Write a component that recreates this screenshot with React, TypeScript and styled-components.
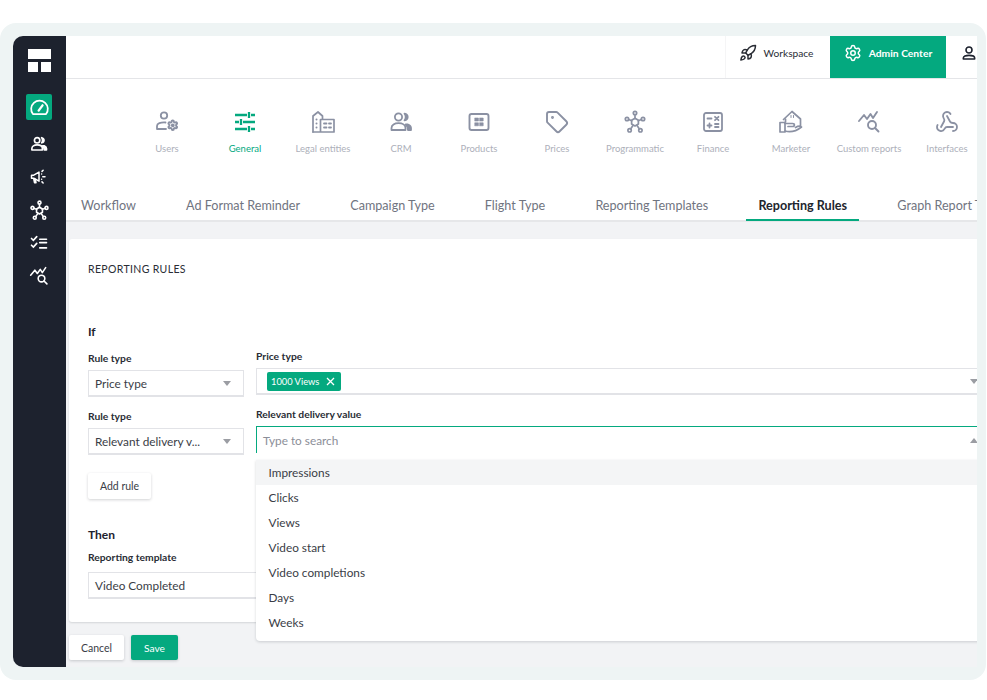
import React from "react";
import styled, { createGlobalStyle } from "styled-components";
import { Rocket, Settings, Tag, Webhook } from "lucide-react";

const Global = createGlobalStyle`
  html, body { margin: 0; padding: 0; background: #fff; }
  * { box-sizing: border-box; }
  body { font-family: "Lato", "Open Sans", sans-serif; }
`;

const GREEN = "#04a97f";

const Frame = styled.div`
  margin-top: 23px;
  width: 986px;
  height: 657px;
  padding: 13px 9px 13px 13px;
  background: #eef4f4;
  border-radius: 16px;
`;
const Shell = styled.div`
  display: flex;
  width: 964px;
  height: 631px;
  overflow: hidden;
  border-radius: 10px 0 0 10px;
  background: #f2f3f5;
`;
const Sidebar = styled.nav`
  width: 53px;
  flex: none;
  background: #1d222e;
  display: flex;
  flex-direction: column;
  align-items: center;
  padding-top: 13px;
`;
const Logo = styled.div`
  width: 23px;
  display: grid;
  grid-template-columns: 10px 10px;
  grid-template-rows: 10px 10px;
  gap: 3px;
  margin-bottom: 22px;
  & > i { background: #fff; display: block; }
  & > i:first-child { grid-column: 1 / 3; }
`;
const SideItem = styled.div<{ $active?: boolean }>`
  width: 26px;
  height: 26px;
  margin: 0 1px ${(p) => (p.$active ? "11px" : "7px")} 0;
  border-radius: 2px;
  display: flex;
  align-items: center;
  justify-content: center;
  color: #fff;
  background: ${(p) => (p.$active ? GREEN : "transparent")};
`;
const Main = styled.div`
  flex: 1;
  min-width: 0;
  display: flex;
  flex-direction: column;
`;
const TopBar = styled.header`
  height: 43px;
  flex: none;
  background: #fff;
  border-bottom: 1px solid #e4e5e8;
  display: flex;
  justify-content: flex-end;
`;
const TopBtn = styled.div<{ $active?: boolean; $w: number }>`
  width: ${(p) => p.$w}px;
  height: 42px;
  padding: 0 ${(p) => (p.$active ? "0" : "4px")} 9px 0;
  display: flex;
  align-items: center;
  justify-content: center;
  gap: 7px;
  font-size: ${(p) => (p.$active ? "10.3px" : "10.2px")};
  font-weight: ${(p) => (p.$active ? 700 : 400)};
  color: ${(p) => (p.$active ? "#fff" : "#2a2d35")};
  background: ${(p) => (p.$active ? GREEN : "#fff")};
  border-left: ${(p) => (p.$active ? "none" : "1px solid #f5f5f6")};
`;
const UserSlot = styled.div`
  width: 31px;
  height: 42px;
  padding-bottom: 9px;
  display: flex;
  align-items: center;
  justify-content: flex-end;
  color: #1d222e;
`;
const IconNav = styled.div`
  height: 91px;
  flex: none;
  background: #fff;
  display: grid;
  grid-template-columns: repeat(11, 78px);
  padding: 31px 0 0 62px;
  overflow: hidden;
`;
const NavItem = styled.div<{ $active?: boolean }>`
  display: flex;
  flex-direction: column;
  align-items: center;
  gap: 9px;
  font-size: 9.5px;
  line-height: 12px;
  white-space: nowrap;
  color: ${(p) => (p.$active ? GREEN : "#adb0ba")};
  & > svg { color: ${(p) => (p.$active ? GREEN : "#8b91a3")}; }
`;
const Tabs = styled.div`
  height: 52px;
  flex: none;
  background: #fff;
  box-shadow: inset 0 -2px 0 #e6e7e9;
  display: flex;
  gap: 26.2px;
  padding: 0 0 0 3px;
  overflow: hidden;
`;
const Tab = styled.div<{ $active?: boolean }>`
  flex: none;
  height: 51px;
  padding: 27px 12px 0;
  line-height: 18px;
  font-size: 12.6px;
  white-space: nowrap;
  color: ${(p) => (p.$active ? "#22252d" : "#70747f")};
  font-weight: ${(p) => (p.$active ? 700 : 400)};
  border-bottom: 2px solid ${(p) => (p.$active ? GREEN : "transparent")};
`;
const Body = styled.div`
  position: relative;
  flex: 1;
  min-height: 0;
  padding: 17px 0 0 3px;
`;
const Card = styled.section`
  height: 383px;
  background: #fff;
  border-radius: 3px 0 0 3px;
  box-shadow: 0 1px 2px rgba(30, 34, 46, 0.14);
  padding: 24px 0 0 19px;
`;
const CardTitle = styled.h2`
  margin: 0 0 48px;
  font-size: 10.5px;
  line-height: 13px;
  font-weight: 400;
  letter-spacing: 0.35px;
  color: #2a2d35;
`;
const Heading = styled.h3`
  margin: 0 0 9px;
  font-size: 12px;
  line-height: 16px;
  font-weight: 700;
  color: #1d222e;
`;
const ThenHeading = styled(Heading)`
  margin-bottom: 7px;
`;
const Row = styled.div`
  display: flex;
  gap: 12px;
  height: 58px;
`;
const Col = styled.div<{ $left?: boolean }>`
  display: flex;
  flex-direction: column;
  width: ${(p) => (p.$left ? "156px" : "730px")};
  flex: none;
  padding-top: ${(p) => (p.$left ? "2px" : "0")};
`;
const Label = styled.label`
  font-size: 10.3px;
  line-height: 14px;
  font-weight: 700;
  color: #2a2d35;
  margin-bottom: 5px;
`;
const Select = styled.div<{ $open?: boolean }>`
  height: 27px;
  background: #fff;
  border: 1px solid #e2e3e7;
  border-bottom-width: 2px;
  display: flex;
  align-items: center;
  padding: 0 6px;
  font-size: 11.8px;
  color: #3a3d46;
  ${(p) => p.$open && `
    border: none;
    border-top: 1px solid ${GREEN};
    border-left: 1px solid ${GREEN};
    color: #8b8e98;
  `}
`;
const Grow = styled.span`
  flex: 1;
  min-width: 0;
  white-space: nowrap;
`;
const Caret = styled.span<{ $up?: boolean; $right?: number }>`
  width: 0;
  height: 0;
  border-left: 4.5px solid transparent;
  border-right: 4.5px solid transparent;
  ${(p) => (p.$up ? "border-bottom: 5px solid #9b9da3;" : "border-top: 5px solid #9b9da3;")}
  margin-right: ${(p) => p.$right ?? 0}px;
`;
const Chip = styled.span`
  height: 19px;
  background: ${GREEN};
  color: #fff;
  border-radius: 2px;
  font-size: 9.3px;
  display: inline-flex;
  align-items: center;
  gap: 7px;
  padding: 0 6px 0 4px;
  margin-left: 4px;
`;
const GhostBtn = styled.button`
  height: 26px;
  padding: 0 12px;
  border: none;
  background: #fff;
  border-radius: 2px;
  box-shadow: 0 1px 3px rgba(30, 34, 46, 0.2);
  font: 400 10.5px "Lato", sans-serif;
  color: #3a3d46;
`;
const AddRow = styled.div`
  margin: 0 0 28px;
  padding-top: 8px;
`;
const ThenLabel = styled(Label)`
  display: block;
  margin-bottom: 8px;
`;
const ThenSelect = styled(Select)`
  width: 180px;
`;
const Footer = styled.div`
  display: flex;
  gap: 7px;
  margin-top: 13px;
  & > button { height: 25px; }
`;
const Primary = styled(GhostBtn)`
  background: ${GREEN};
  color: #fff;
  padding: 0 13px;
  font-size: 10.2px;
`;
const Menu = styled.ul`
  position: absolute;
  left: 190px;
  top: 238px;
  width: 730px;
  margin: 0;
  padding: 0 0 6px;
  list-style: none;
  background: #fff;
  border-radius: 0 0 0 4px;
  box-shadow: 0 1px 3px rgba(30, 34, 46, 0.18);
`;
const MenuItem = styled.li<{ $active?: boolean }>`
  height: 25px;
  line-height: 25px;
  padding-left: 12.5px;
  font-size: 11.8px;
  color: #3a3d46;
  background: ${(p) => (p.$active ? "#f4f5f6" : "#fff")};
`;

type IP = { size?: number; sw?: number; children: React.ReactNode };
const Ico = ({ size = 24, sw = 1.8, children }: IP) => (
  <svg width={size} height={size} viewBox="0 0 24 24" fill="none" stroke="currentColor" strokeWidth={sw} strokeLinecap="round" strokeLinejoin="round">
    {children}
  </svg>
);

const GEAR = "M12.22 2h-.44a2 2 0 0 0-2 2v.18a2 2 0 0 1-1 1.73l-.43.25a2 2 0 0 1-2 0l-.15-.08a2 2 0 0 0-2.73.73l-.22.38a2 2 0 0 0 .73 2.73l.15.1a2 2 0 0 1 1 1.72v.51a2 2 0 0 1-1 1.74l-.15.09a2 2 0 0 0-.73 2.73l.22.38a2 2 0 0 0 2.73.73l.15-.08a2 2 0 0 1 2 0l.43.25a2 2 0 0 1 1 1.73V20a2 2 0 0 0 2 2h.44a2 2 0 0 0 2-2v-.18a2 2 0 0 1 1-1.73l.43-.25a2 2 0 0 1 2 0l.15.08a2 2 0 0 0 2.73-.73l.22-.39a2 2 0 0 0-.73-2.73l-.15-.08a2 2 0 0 1-1-1.74v-.5a2 2 0 0 1 1-1.74l.15-.09a2 2 0 0 0 .73-2.73l-.22-.38a2 2 0 0 0-2.73-.73l-.15.08a2 2 0 0 1-2 0l-.43-.25a2 2 0 0 1-1-1.73V4a2 2 0 0 0-2-2z";

const Hub = ({ size = 24, sw = 1.7 }: { size?: number; sw?: number }) => (
  <Ico size={size} sw={sw}>
    <path d="M12 4.6V8.5M5.6 9.5l3.2 1.2M18.4 9.5l-3.2 1.2M7.6 19l2.2-3.2M16.4 19l-2.2-3.2" />
    <path d="M12 8.3l3.4 2 0 3.7-3.4 2-3.4-2 0-3.7z" />
    <circle cx="12" cy="3" r="1.7" /><circle cx="4" cy="9" r="1.7" /><circle cx="20" cy="9" r="1.7" />
    <circle cx="6.6" cy="20.3" r="1.7" /><circle cx="17.4" cy="20.3" r="1.7" />
  </Ico>
);
const Insight = ({ size = 24 }: { size?: number }) => (
  <Ico size={size} sw={1.9}>
    <path d="M2 11l5-6 3 4 3.5-5 2.500 4 4-6" />
    <circle cx="15" cy="15" r="4" />
    <path d="M18 18l3.500 3.500" />
  </Ico>
);
const Crm = ({ size = 24, sw = 1.8 }: { size?: number; sw?: number }) => (
  <Ico size={size} sw={sw}>
    <circle cx="9.5" cy="7" r="3.6" />
    <path d="M2.5 20v-2c0-3 3-4.8 7-4.8s7 1.8 7 4.8v2z" />
    <path d="M15.5 3.6c2.3.5 3.2 2 3.2 3.4s-.9 2.9-3.2 3.4c1-1 1.2-2.2 1.2-3.4s-.2-2.4-1.2-3.4z" fill="currentColor" />
    <path d="M19 14.5c2 .8 3 2 3 3.5v2h-3c0-2.3-.4-4-2.4-5.500z" fill="currentColor" />
  </Ico>
);

const items: { label: string; active?: boolean; icon: React.ReactNode }[] = [
  { label: "Users", icon: (
    <Ico>
      <circle cx="9" cy="5.500" r="3.200" />
      <path d="M10.500 12.500c-5-.3-8.500 1-8.500 3.500v3h9" />
      <path d={GEAR} transform="translate(12 9.500) scale(.48)" strokeWidth="4" />
      <circle cx="17.800" cy="15.300" r="1" fill="currentColor" />
    </Ico>
  ) },
  { label: "General", active: true, icon: (
    <Ico sw={2.3}>
      <path d="M2 5h12M18 5h4M2 12h4M10 12h12M2 19h12M18 19h4" strokeLinecap="butt" />
      <path d="M16 2v6M8 9v6M16 16v6" strokeLinecap="butt" />
    </Ico>
  ) },
  { label: "Legal entities", icon: (
    <Ico sw={1.7}>
      <path d="M2 22V6l5-4 4.500 4v3" />
      <path d="M2 22h21V9.500H9.500V22" />
      <path d="M5.500 9.500h.01M5.500 13.500h.01M5.500 17.500h.01" strokeWidth="2" />
      <path d="M13 13.500h2.500M13 17.500h2.500M18 13.500h2M18 17.500h2" strokeWidth="1.800" />
    </Ico>
  ) },
  { label: "CRM", icon: <Crm /> },
  { label: "Products", icon: (
    <Ico sw={1.9}>
      <rect x="2.500" y="4" width="19" height="16" rx="2" />
      <path d="M8 8h3.400v3H8zM12.800 8h3.400v3h-3.400zM8 12.800h3.400v3H8zM12.800 12.800h3.400v3h-3.400z" fill="currentColor" strokeWidth=".6" />
    </Ico>
  ) },
  { label: "Prices", icon: <Tag size={24} strokeWidth={1.9} /> },
  { label: "Programmatic", icon: <Hub /> },
  { label: "Finance", icon: (
    <Ico sw={1.8}>
      <rect x="3" y="3" width="18" height="18" rx="2" />
      <path d="M6.500 8.500h4M14 6.800l3.500 3.400M17.500 6.800L14 10.200M6.500 15.500h4M8.500 13.500v4M14 14h3.500M14 17h3.500" />
    </Ico>
  ) },
  { label: "Marketer", icon: (
    <Ico sw={1.7}>
      <path d="M4.500 9.500L13 1.500l8.500 7.500v6.500" />
      <path d="M12 5.500v2M14.500 5.500v2" strokeWidth="1" />
      <path d="M6.500 9v3" />
      <path d="M1 12.500h5v9.500H1z" />
      <path d="M6 13.500h7.500c2.500 0 2.500 3 0 3H9M6 21c5 1.500 9.500 1.500 16.500-4-1.500-1.500-3.500-1-6 .5" />
    </Ico>
  ) },
  { label: "Custom reports", icon: <Insight /> },
  { label: "Interfaces", icon: <Webhook size={24} strokeWidth={1.8} /> },
];

const tabs = ["Workflow", "Ad Format Reminder", "Campaign Type", "Flight Type", "Reporting Templates", "Reporting Rules", "Graph Report Templates"];
const options = ["Impressions", "Clicks", "Views", "Video start", "Video completions", "Days", "Weeks"];

export default function App() {
  return (
    <>
      <Global />
      <Frame>
        <Shell>
          <Sidebar>
            <Logo><i /><i /><i /></Logo>
            <SideItem $active>
              <Ico size={21} sw={2}>
                <path d="M4.500 19.500a9.500 9.500 0 1 1 15 0z" />
                <path d="M11 15.500l4.500-6" strokeWidth="2.600" />
              </Ico>
            </SideItem>
            <SideItem><Crm size={18} sw={2.2} /></SideItem>
            <SideItem>
              <Ico size={18} sw={2}>
                <path d="M2 9.500h3l7-4v12l-7-4H2z" />
                <path d="M5 14.500l1 5h2l-1-4.500" />
                <path d="M16 4.500l1.500-1.500M16 18.500l1.500 1.500M17 11.500h3M15.500 8h.01M15.500 15h.01" />
              </Ico>
            </SideItem>
            <SideItem><Hub size={21} sw={1.8} /></SideItem>
            <SideItem>
              <Ico size={18} sw={2.2}>
                <path d="M2 6l2.500 2.500L9 3.500M2 15l2.500 2.500L9 12.500M13 7h9M13 11.500h9M13 18.500h9" strokeLinejoin="miter" />
              </Ico>
            </SideItem>
            <SideItem><Insight size={20} /></SideItem>
          </Sidebar>
          <Main>
            <TopBar>
              <TopBtn $w={105}>
                <Rocket size={18} strokeWidth={2} />
                Workspace
              </TopBtn>
              <TopBtn $w={116} $active>
                <Settings size={18} strokeWidth={2} />
                Admin Center
              </TopBtn>
              <UserSlot>
                <Ico size={16} sw={2.4}>
                  <circle cx="12" cy="7.500" r="4.500" />
                  <path d="M3.500 21v-1.500c0-3 3.500-4 8.500-4s8.500 1 8.500 4V21z" />
                </Ico>
              </UserSlot>
            </TopBar>
            <IconNav>
              {items.map((it) => (
                <NavItem key={it.label} $active={it.active}>
                  {it.icon}
                  <span>{it.label}</span>
                </NavItem>
              ))}
            </IconNav>
            <Tabs>
              {tabs.map((t) => (
                <Tab key={t} $active={t === "Reporting Rules"}>{t}</Tab>
              ))}
            </Tabs>
            <Body>
              <Card>
                <CardTitle>REPORTING RULES</CardTitle>
                <Heading>If</Heading>
                <Row>
                  <Col $left>
                    <Label>Rule type</Label>
                    <Select><Grow>Price type</Grow><Caret $right={6} /></Select>
                  </Col>
                  <Col>
                    <Label>Price type</Label>
                    <Select>
                      <Grow><Chip>1000 Views
                        <svg width="9" height="9" viewBox="0 0 9 9" stroke="#fff" strokeWidth="1.3"><path d="M1 1l7 7M8 1L1 8" /></svg>
                      </Chip></Grow>
                      <Caret $right={1} />
                    </Select>
                  </Col>
                </Row>
                <Row>
                  <Col $left>
                    <Label>Rule type</Label>
                    <Select><Grow>Relevant delivery v...</Grow><Caret $right={6} /></Select>
                  </Col>
                  <Col>
                    <Label>Relevant delivery value</Label>
                    <Select $open><Grow>Type to search</Grow><Caret $up $right={2} /></Select>
                  </Col>
                </Row>
                <AddRow><GhostBtn>Add rule</GhostBtn></AddRow>
                <ThenHeading>Then</ThenHeading>
                <ThenLabel>Reporting template</ThenLabel>
                <ThenSelect>Video Completed</ThenSelect>
              </Card>
              <Footer>
                <GhostBtn>Cancel</GhostBtn>
                <Primary>Save</Primary>
              </Footer>
              <Menu>
                {options.map((o, i) => (
                  <MenuItem key={o} $active={i === 0}>{o}</MenuItem>
                ))}
              </Menu>
            </Body>
          </Main>
        </Shell>
      </Frame>
    </>
  );
}
